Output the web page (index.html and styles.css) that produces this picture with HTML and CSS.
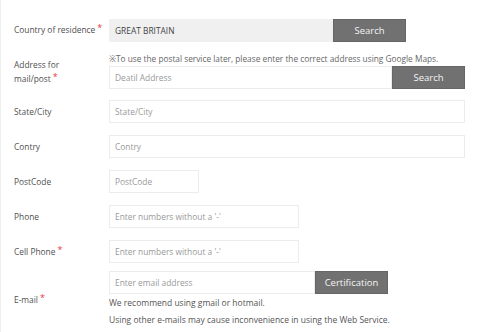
FILE: index.html
```html
<html lang="en">
<head>
    <meta charset="UTF-8">
    <meta name="viewport" content="width=device-width, initial-scale=1.0">
    <title>Member info</title>

    <link rel="stylesheet" href="styles.css">
</head>
<body>
    <div class='form'>
        <div class='row'>
            <div class='label up'>Country of residence<span class='req'>*</span></div>
            <div class='field'>
                <div class='line'>
                    <div class='input fixed w-country'>GREAT BRITAIN</div>
                    <button class='btn'>Search</button>
                </div>
            </div>
        </div>

        <div class='row addr'>
            <div class='label'>Address for<br>mail/post<span class='req'>*</span></div>
            <div class='field'>
                <p class='notice'>※To use the postal service later, please enter the correct address using Google Maps.</p>
                <div class='line'>
                    <div class='input w-address'>Deatil Address</div>
                    <button class='btn'>Search</button>
                </div>
            </div>
        </div>

        <div class='row'>
            <div class='label'>State/City</div>
            <div class='field'><div class='input w-full'>State/City</div></div>
        </div>

        <div class='row'>
            <div class='label'>Contry</div>
            <div class='field'><div class='input w-full'>Contry</div></div>
        </div>

        <div class='row'>
            <div class='label'>PostCode</div>
            <div class='field'><div class='input w-post'>PostCode</div></div>
        </div>

        <div class='row'>
            <div class='label'>Phone</div>
            <div class='field'><div class='input w-phone'>Enter numbers without a '-'</div></div>
        </div>

        <div class='row'>
            <div class='label'>Cell Phone<span class='req'>*</span></div>
            <div class='field'><div class='input w-phone'>Enter numbers without a '-'</div></div>
        </div>

        <div class='row last'>
            <div class='label'>E-mail<span class='req'>*</span></div>
            <div class='field'>
                <div class='line'>
                    <div class='input w-mail'>Enter email address</div>
                    <button class='btn'>Certification</button>
                </div>
                <p class='hint'>We recommend using gmail or hotmail.</p>
                <p class='hint'>Using other e-mails may cause inconvenience in using the Web Service.</p>
            </div>
        </div>
    </div>
</body>
</html>
```

FILE: styles.css
```css
body{
    margin: 0;
    background: #fff;
    font-family: 'Open Sans', 'Noto Sans', sans-serif;
    color: #555;
}
.form{
    border-left: 1px solid #efefef;
    padding: 19px 0 0 13px;
    height: 332px;
    box-sizing: border-box;
}
.row{
    display: grid;
    grid-template-columns: 95px 1fr;
    align-items: center;
    margin-bottom: 12px;
}
.row.addr{
    margin-bottom: 11px;
}
.row.last{
    margin-top: -4px;
}
.label{
    font-size: 8.4px;
    line-height: 14px;
    color: #4f4f4f;
}
.label.up{
    margin-top: -2px;
}
.req{
    color: #e8383d;
    font-size: 9px;
    position: relative;
    top: -2px;
    margin-left: 2px;
}
.line{
    display: flex;
}
.input{
    height: 23px;
    box-sizing: border-box;
    border: 1px solid #ececec;
    padding-left: 5px;
    font-size: 8.4px;
    line-height: 21px;
    color: #999;
}
.input.fixed{
    background: #f0f0f0;
    border-color: #f0f0f0;
    color: #444;
}
.w-country{ width: 224px; }
.w-address{ width: 283px; }
.w-full{ width: 356px; }
.w-post{ width: 90px; }
.w-phone{ width: 190px; }
.w-mail{ width: 206px; }
.btn{
    width: 73px;
    height: 23px;
    margin: 0;
    border: 1px solid #666;
    background: #717171;
    color: #f4f4f4;
    font-family: inherit;
    font-size: 9.5px;
    font-weight: 500;
    padding: 0;
}
.notice{
    margin: 0 0 2px;
    font-size: 8.3px;
    line-height: 10px;
    color: #666;
}
.hint{
    margin: 0;
    font-size: 8.5px;
    line-height: 17px;
    color: #555;
}
```
